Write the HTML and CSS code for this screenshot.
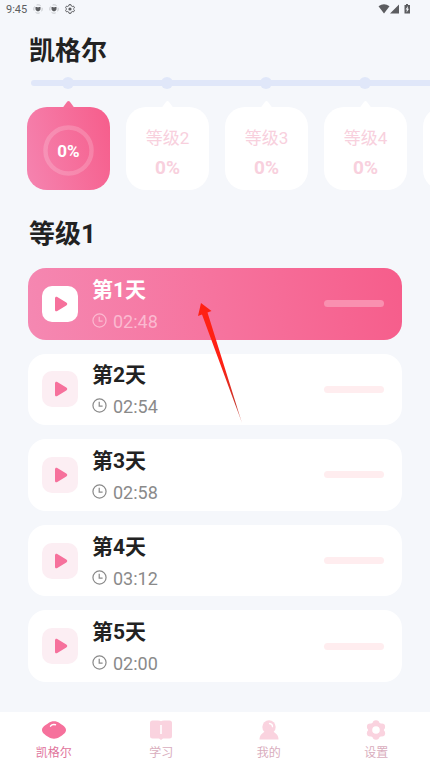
FILE: index.html
```html
<!DOCTYPE html>
<html lang="zh-CN">
<head>
<meta charset="utf-8">
<meta name="viewport" content="width=device-width, initial-scale=1">
<title>凯格尔</title>
<link rel="stylesheet" href="styles.css">
</head>
<body>
<svg class="defs" aria-hidden="true">
  <symbol id="play" viewBox="0 0 14 16"><path d="M1 2.200C1 .8 2.200.3 3.300.9l9 5.700c1.300.8 1.300 2 0 2.800l-9 5.700C2.200 15.700 1 15.200 1 13.800z" fill="currentColor"/></symbol>
  <symbol id="clock" viewBox="0 0 16 16"><circle cx="8" cy="8" r="7" fill="none" stroke="currentColor" stroke-width="1.300"/><path d="M7.700 4v4.600h3.600" fill="none" stroke="currentColor" stroke-width="1.300"/></symbol>
  <symbol id="shield" viewBox="0 0 10 10"><circle cx="5" cy="5" r="4.200" fill="none" stroke="currentColor" stroke-width=".6" stroke-dasharray="4.400 2.200" stroke-dashoffset="2" opacity=".5"/><path d="M2.500 3h1.800L5 3.700 5.700 3h1.800v2.200Q7.500 6.800 5 7.500 2.500 6.800 2.500 5.200z" fill="currentColor"/></symbol>
</svg>
<header class="status">
  <span>9:45</span>
  <svg class="notice" aria-hidden="true"><use href="#shield"/></svg>
  <svg class="notice" aria-hidden="true"><use href="#shield"/></svg>
  <svg class="gear" viewBox="0 0 10 10" aria-hidden="true"><path d="M4 .7h2l.3 1.200 1 .6 1.200-.4 1 1.700-.9.9v.6l.9.9-1 1.700-1.200-.4-1 .6L6 9.300H4l-.3-1.200-1-.6-1.200.4-1-1.700.9-.9v-.6l-.9-.9 1-1.700 1.200.4 1-.6z" fill="none" stroke="currentColor"/><circle cx="5" cy="5" r="1.600" fill="currentColor"/></svg>
  <svg class="signals" viewBox="0 0 34 12" aria-hidden="true"><path d="M.5 3.200Q6 -.6 11.500 3.200L6 10.500z M12 10.500L21 1.500v9z M26.500 2h1.500V1h2v1h2v8.500h-5.500z" fill="currentColor"/><path d="M30 3L27.600 6.500h1.300L28.500 9.400 31 5.700h-1.300z" fill="#f5f7fb"/></svg>
</header>
<main>
  <h1>凯格尔</h1>
  <div class="scroller">
    <div class="track"><i></i><i></i><i></i><i></i><i></i></div>
    <div class="levels">
      <button class="level current" aria-label="等级1"><svg class="ring" viewBox="0 0 52 52" aria-hidden="true"><circle cx="26" cy="26" r="23.500" fill="none" stroke="#fff" stroke-opacity=".18" stroke-width="4.500"/></svg><b>0%</b></button>
      <button class="level"><span>等级2</span><b>0%</b></button>
      <button class="level"><span>等级3</span><b>0%</b></button>
      <button class="level"><span>等级4</span><b>0%</b></button>
      <button class="level"></button>
    </div>
  </div>
  <h2>等级1</h2>
  <div class="days">
    <button class="day active"><span class="tile"><svg><use href="#play"/></svg></span><span class="info"><b>第1天</b><span class="time"><svg><use href="#clock"/></svg>02:48</span></span><span class="bar"></span></button>
    <button class="day"><span class="tile"><svg><use href="#play"/></svg></span><span class="info"><b>第2天</b><span class="time"><svg><use href="#clock"/></svg>02:54</span></span><span class="bar"></span></button>
    <button class="day"><span class="tile"><svg><use href="#play"/></svg></span><span class="info"><b>第3天</b><span class="time"><svg><use href="#clock"/></svg>02:58</span></span><span class="bar"></span></button>
    <button class="day"><span class="tile"><svg><use href="#play"/></svg></span><span class="info"><b>第4天</b><span class="time"><svg><use href="#clock"/></svg>03:12</span></span><span class="bar"></span></button>
    <button class="day"><span class="tile"><svg><use href="#play"/></svg></span><span class="info"><b>第5天</b><span class="time"><svg><use href="#clock"/></svg>02:00</span></span><span class="bar"></span></button>
    <svg class="pointer" viewBox="0 0 46 122" aria-hidden="true"><defs><linearGradient id="fade" x1="0" y1="0" x2="0" y2="1"><stop offset=".5" stop-color="#ff2114"/><stop offset=".85" stop-color="#c9362c"/><stop offset="1" stop-color="#c9362c" stop-opacity=".5"/></linearGradient></defs><path d="M3 1L13.500 9 9.500 10.500 44 121 4 12.500 0 14z" fill="url(#fade)"/></svg>
  </div>
</main>
<nav class="tabs">
  <a href="#kegel" class="on"><svg viewBox="0 0 26 20" aria-hidden="true"><path d="M1 10C1 7 4 5.500 7.500 3 10.500.8 15.500.8 18.500 3 22 5.500 25 7 25 10s-3 4.800-6.500 7c-3 2.200-8 2.200-11 0C4 14.800 1 13 1 10z" fill="currentColor"/><path d="M9.500 6.200c1-1.500 3-2 5-1.500" fill="none" stroke="#fff" stroke-width="1.400" stroke-linecap="round"/></svg>凯格尔</a>
  <a href="#learn"><svg viewBox="0 0 26 20" aria-hidden="true"><path d="M4.500.5H10q2.200 0 3 .8.800-.8 3-.8h5.500Q24 .5 24 3v13q0 2.500-2.500 2.500H15L13 20l-2-1.500H4.500Q2 18.500 2 16V3Q2 .5 4.500.5z" fill="currentColor"/><path d="M13 5v9" stroke="#fff" stroke-width="1.600"/></svg>学习</a>
  <a href="#me"><svg viewBox="0 0 26 20" aria-hidden="true"><circle cx="13" cy="7" r="6.700" fill="currentColor"/><path d="M3.500 19.500c0-4 2.500-6.500 6-8h7c3.500 1.500 6 4 6 8z" fill="currentColor"/><path d="M13.500 3.500c2 .2 3 1.500 3 3.200" fill="none" stroke="#fff" stroke-width="1.300" stroke-linecap="round"/></svg>我的</a>
  <a href="#settings"><svg viewBox="0 0 26 20" aria-hidden="true"><g fill="currentColor"><circle cx="13" cy="10" r="8"/><circle cx="13" cy="3.500" r="3.300"/><circle cx="13" cy="16.500" r="3.300"/><circle cx="7.200" cy="6.800" r="3.300"/><circle cx="18.800" cy="6.800" r="3.300"/><circle cx="7.200" cy="13.200" r="3.300"/><circle cx="18.800" cy="13.200" r="3.300"/></g><circle cx="13" cy="10" r="3.800" fill="#fff"/></svg>设置</a>
</nav>
</body>
</html>
```

FILE: styles.css
```css
* { box-sizing: border-box; }

body {
  margin: 0;
  min-height: 100vh;
  display: flex;
  flex-direction: column;
  background: #f5f7fb;
  color: #222;
  font-family: Roboto, "Noto Sans CJK SC", sans-serif;
}

button {
  border: 0;
  padding: 0;
  font: inherit;
  color: inherit;
  cursor: pointer;
}

svg { display: block; flex: none; }
.defs { width: 0; height: 0; position: absolute; }

.status {
  display: flex;
  align-items: center;
  gap: 6px;
  height: 18px;
  padding: 0 18px 0 6px;
  color: #5c5d60;
  font-size: 11px;
}
.notice, .gear { width: 10px; height: 10px; }
.signals { width: 34px; height: 12px; margin-left: auto; }

main {
  flex: 1;
  display: flex;
  flex-direction: column;
}

h1, h2 {
  margin: 0 29px;
  font-size: 26px;
  line-height: 36px;
  font-weight: 700;
}
h1 { margin-top: 15px; }
h2 { margin-top: 26px; }

.scroller {
  overflow-x: auto;
  scrollbar-width: none;
  padding-top: 11px;
}
.track {
  display: flex;
  align-items: center;
  gap: 87px;
  width: 491px;
  height: 6px;
  margin-left: 31px;
  padding-left: 31px;
  border-radius: 3px 0 0 3px;
  background: #e0e7f9;
}
.track i {
  flex: none;
  width: 12px;
  height: 12px;
  border-radius: 50%;
  background: #e0e7f9;
}
.levels {
  display: flex;
  gap: 16px;
  width: max-content;
  padding: 21px 27px 0;
}
.level {
  position: relative;
  display: flex;
  flex-direction: column;
  align-items: center;
  justify-content: center;
  gap: 6px;
  width: 83px;
  height: 83px;
  padding-top: 9px;
  border-radius: 20px;
  background: #fff;
  color: #f8d0dd;
  font-size: 17px;
  line-height: 24px;
}
.level b { font-size: 19px; }
.level::before {
  content: "";
  position: absolute;
  top: -6px;
  left: 50%;
  width: 12px;
  height: 7px;
  margin-left: -6px;
  background: inherit;
  clip-path: polygon(0 100%, 40% 8%, 50% 0, 60% 8%, 100% 100%);
}
.level.current {
  padding-top: 5px;
  background: linear-gradient(75deg, #f584b0, #f65d8b);
  color: #fff;
}
.level.current::before { background: #f5709b; }
.level.current b { font-size: 17px; }
.ring {
  position: absolute;
  top: 18px;
  left: 16px;
  width: 51px;
  height: 51px;
}

.days {
  position: relative;
  flex: 1;
  display: grid;
  grid-auto-rows: 1fr;
  gap: 14px;
  margin: 16px 28px 30px;
}
.day {
  display: flex;
  align-items: center;
  padding: 0 18px 0 14px;
  border-radius: 18px;
  background: #fff;
  text-align: left;
}
.day.active {
  background: linear-gradient(80deg, #f588b2, #f6739e 50%, #f65d8b);
  color: #fff;
}
.tile {
  display: grid;
  place-items: center;
  width: 36px;
  height: 36px;
  padding-left: 2px;
  border-radius: 10px;
  background: #fceef3;
  color: #f6719c;
}
.tile svg { width: 14px; height: 16px; }
.active .tile { background: #fff; }
.info {
  flex: 1;
  margin-left: 14px;
  padding-top: 3px;
  display: flex;
  flex-direction: column;
  gap: 3px;
}
.info b { font-size: 21px; line-height: 30px; }
.time {
  display: flex;
  align-items: flex-start;
  gap: 6px;
  color: #8a8a8a;
  font-size: 18px;
  line-height: 28px;
}
.time svg { width: 15px; height: 15px; margin-top: 5px; }
.active .time { color: #fbb9d0; }
.bar {
  width: 60px;
  height: 7px;
  border-radius: 4px;
  background: #ffedef;
}
.active .bar { background: #f990b0; }
.pointer {
  position: absolute;
  top: 34px;
  left: 170px;
  width: 46px;
  height: 122px;
  pointer-events: none;
}

.tabs {
  display: grid;
  grid-template-columns: repeat(4, 1fr);
  height: 52px;
  background: #fff;
}
.tabs a {
  display: flex;
  flex-direction: column;
  align-items: center;
  gap: 4px;
  padding-top: 8px;
  color: #d9adbd;
  font-size: 12px;
  line-height: 18px;
  text-decoration: none;
}
.tabs svg { width: 26px; height: 20px; color: #fad3df; }
.tabs .on { color: #e0739b; }
.tabs .on svg { color: #f6719c; }
```
